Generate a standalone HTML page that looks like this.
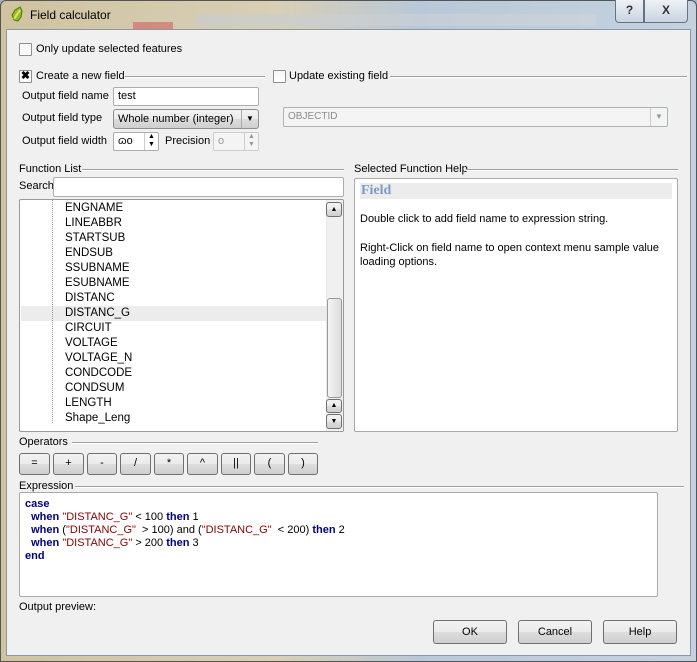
<!DOCTYPE html>
<html><head><style>
*{box-sizing:border-box}
body{margin:0;width:697px;height:662px;overflow:hidden;font-family:"Liberation Sans",sans-serif;font-size:11px;color:#000;background:#9fb3c8;position:relative}
.a{position:absolute}
.frame{left:0;top:0;width:697px;height:662px;background:linear-gradient(90deg,#cfc3a0 0,#d8cfb5 40%,#b9c8d8 60%,#c4d2e0 100%);border:1px solid #555;border-radius:6px 6px 0 0}
.client{left:6px;top:29px;width:685px;height:627px;background:#f0f0f0;border:1px solid #8a98a8}
.cb{width:13px;height:13px;border:1px solid #8e8f8f;background:linear-gradient(#f4f4f4,#fff);border-radius:1px}
.line{height:1px;background:#a0a0a0;border-bottom:1px solid #fff;box-sizing:content-box}
.inp{background:#fff;border:1px solid #abadb3;border-radius:2px}
.btn{border:1px solid #707070;border-radius:3px;background:linear-gradient(#f2f2f2 0,#ebebeb 50%,#dddddd 51%,#cfcfcf 100%);text-align:center;line-height:19px}
.li{position:absolute;left:64px;font-size:11.5px}
.kw{color:#00008b;font-weight:bold}
.st{color:#8b0000}
</style></head><body>
<div class="a frame"></div>
<svg class="a" style="left:9px;top:6px" width="16" height="17"><path d="M11 1 L6 4 L3 9 L5 14 L9 15 L12 11 L13 5 Z" fill="#8dbd2a" stroke="#4d7a10"/><path d="M5 13 L11 4" stroke="#f4e04a" stroke-width="2"/></svg>
<div class="a" style="left:30px;top:8px;font-size:12px">Field calculator</div>
<div class="a" style="left:133px;top:22px;width:40px;height:8px;background:#d26060;opacity:.6"></div>
<div class="a" style="left:196px;top:14px;width:400px;height:12px;background:linear-gradient(90deg,#c6ccd4,#d0d4d8);opacity:.6"></div>
<div class="a" style="left:615px;top:0px;width:29px;height:23px;border:1px solid #6a7080;border-top:none;border-radius:0 0 0 4px;background:linear-gradient(#eef2f6,#c8d4e0);text-align:center;font-weight:bold;color:#333;line-height:20px;font-size:12px">?</div>
<div class="a" style="left:644px;top:0px;width:44px;height:23px;border:1px solid #6a7080;border-top:none;border-radius:0 0 4px 0;background:linear-gradient(#eef2f6,#c8d4e0);text-align:center;font-weight:bold;color:#333;line-height:20px;font-size:12px">X</div>
<div class="a client"></div>

<div class="a cb" style="left:19px;top:43px"></div>
<div class="a" style="left:36px;top:43px">Only update selected features</div>

<div class="a line" style="left:125px;top:76px;width:140px"></div>
<div class="a line" style="left:390px;top:76px;width:297px"></div>
<div class="a cb" style="left:19px;top:70px;text-align:center;line-height:10px;font-weight:bold;font-size:11px">✖</div>
<div class="a" style="left:36px;top:70px">Create a new field</div>
<div class="a cb" style="left:273px;top:70px"></div>
<div class="a" style="left:289px;top:70px">Update existing field</div>

<div class="a" style="left:22px;top:90px">Output field name</div>
<div class="a inp" style="left:113px;top:87px;width:146px;height:19px;padding:2px 4px">test</div>
<div class="a" style="left:22px;top:112px">Output field type</div>
<div class="a btn" style="left:113px;top:109px;width:146px;height:20px;text-align:left;padding-left:4px;line-height:18px;border-color:#8e8f8f">Whole number (integer)<span style="position:absolute;right:0;top:0;width:17px;height:18px;border-left:1px solid #aaa;text-align:center;font-size:8px">▼</span></div>
<div class="a" style="left:283px;top:107px;width:385px;height:20px;border:1px solid #adb2b5;border-radius:2px;background:#f4f4f4;color:#8d8d8d;padding:3px 4px;font-size:10px">OBJECTID<span style="position:absolute;right:0;top:0;width:17px;height:18px;border-left:1px solid #ccc;text-align:center;font-size:8px;line-height:18px;color:#999">▼</span></div>
<div class="a" style="left:22px;top:135px">Output field width</div>
<div class="a inp" style="left:113px;top:132px;width:46px;height:19px;padding:2px 4px;font-size:11px">ɷo<span style="position:absolute;right:0;top:0;width:14px;height:17px;border-left:1px solid #ccc;font-size:7px;line-height:8px;text-align:center">▲<br>▼</span></div>
<div class="a" style="left:165px;top:135px">Precision</div>
<div class="a inp" style="left:213px;top:132px;width:46px;height:19px;padding:2px 4px;font-size:11px;background:#f4f4f4;color:#999;border-color:#ccc">o<span style="position:absolute;right:0;top:0;width:14px;height:17px;border-left:1px solid #ccc;font-size:7px;line-height:8px;text-align:center">▲<br>▼</span></div>

<div class="a" style="left:19px;top:163px">Function List</div>
<div class="a line" style="left:82px;top:169px;width:262px"></div>
<div class="a" style="left:19px;top:180px">Search</div>
<div class="a inp" style="left:53px;top:177px;width:291px;height:20px"></div>
<div class="a inp" style="left:19px;top:199px;width:325px;height:233px;border-color:#999;overflow:hidden">
 <div class="a" style="left:1px;top:106px;width:305px;height:15px;background:#ececec"></div>
 <div class="a" style="left:32px;top:0;height:223px;border-left:1px dotted #999"></div>
 <div style="position:absolute;left:-19px;top:-199px">
 <div class="li" style="top:201px">ENGNAME</div><div class="li" style="top:216px">LINEABBR</div><div class="li" style="top:231px">STARTSUB</div><div class="li" style="top:246px">ENDSUB</div><div class="li" style="top:261px">SSUBNAME</div><div class="li" style="top:276px">ESUBNAME</div><div class="li" style="top:291px">DISTANC</div><div class="li" style="top:306px">DISTANC_G</div><div class="li" style="top:321px">CIRCUIT</div><div class="li" style="top:336px">VOLTAGE</div><div class="li" style="top:351px">VOLTAGE_N</div><div class="li" style="top:366px">CONDCODE</div><div class="li" style="top:381px">CONDSUM</div><div class="li" style="top:396px">LENGTH</div><div class="li" style="top:411px">Shape_Leng</div>
 </div>
 <div class="a" style="left:306px;top:0;width:17px;height:231px;background:#f0f0f0;border-left:1px solid #e8e8e8"></div>
 <div class="a btn" style="left:306px;top:2px;width:16px;height:15px;font-size:7px;line-height:13px">▲</div>
 <div class="a btn" style="left:307px;top:98px;width:15px;height:100px;background:linear-gradient(90deg,#f4f4f4,#dcdcdc);border-color:#999"></div>
 <div class="a btn" style="left:306px;top:199px;width:16px;height:14px;font-size:7px;line-height:12px">▲</div>
 <div class="a btn" style="left:306px;top:214px;width:16px;height:15px;font-size:7px;line-height:13px">▼</div>
</div>

<div class="a" style="left:354px;top:163px">Selected Function Help</div>
<div class="a line" style="left:466px;top:169px;width:212px"></div>
<div class="a inp" style="left:354px;top:178px;width:324px;height:254px;border-color:#aaa">
 <div class="a" style="left:5px;top:4px;width:312px;height:16px;background:#ececec;font-family:'Liberation Serif',serif;font-weight:bold;font-size:14px;color:#7a9acc;padding-left:1px;line-height:15px">Field</div>
 <div class="a" style="left:5px;top:34px;width:312px">Double click to add field name to expression string.</div>
 <div class="a" style="left:5px;top:62px;width:312px;line-height:14px">Right-Click on field name to open context menu sample value loading options.</div>
</div>

<div class="a" style="left:19px;top:436px">Operators</div>
<div class="a line" style="left:72px;top:442px;width:246px"></div>
<div class="a btn" style="left:19px;top:453px;width:31px;height:22px">=</div>
<div class="a btn" style="left:53px;top:453px;width:31px;height:22px">+</div>
<div class="a btn" style="left:87px;top:453px;width:30px;height:22px">-</div>
<div class="a btn" style="left:120px;top:453px;width:31px;height:22px">/</div>
<div class="a btn" style="left:154px;top:453px;width:30px;height:22px">*</div>
<div class="a btn" style="left:187px;top:453px;width:31px;height:22px">^</div>
<div class="a btn" style="left:221px;top:453px;width:30px;height:22px">||</div>
<div class="a btn" style="left:254px;top:453px;width:31px;height:22px">(</div>
<div class="a btn" style="left:288px;top:453px;width:30px;height:22px">)</div>

<div class="a" style="left:19px;top:480px">Expression</div>
<div class="a line" style="left:75px;top:486px;width:609px"></div>
<div class="a inp" style="left:19px;top:492px;width:639px;height:105px;border-color:#aaa;padding:5px 5px;line-height:13px;font-size:11px">
<span class="kw">case</span><br>&nbsp;&nbsp;<span class="kw">when</span> <span class="st">"DISTANC_G"</span> &lt; 100 <span class="kw">then</span> 1<br>&nbsp;&nbsp;<span class="kw">when</span> (<span class="st">"DISTANC_G"</span>&nbsp; &gt; 100) and (<span class="st">"DISTANC_G"</span>&nbsp; &lt; 200) <span class="kw">then</span> 2<br>&nbsp;&nbsp;<span class="kw">when</span> <span class="st">"DISTANC_G"</span> &gt; 200 <span class="kw">then</span> 3<br><span class="kw">end</span></div>
<div class="a" style="left:19px;top:601px">Output preview:</div>
<div class="a btn" style="left:433px;top:620px;width:74px;height:24px;line-height:22px">OK</div>
<div class="a btn" style="left:518px;top:620px;width:74px;height:24px;line-height:22px">Cancel</div>
<div class="a btn" style="left:603px;top:620px;width:74px;height:24px;line-height:22px">Help</div>
</body></html>
